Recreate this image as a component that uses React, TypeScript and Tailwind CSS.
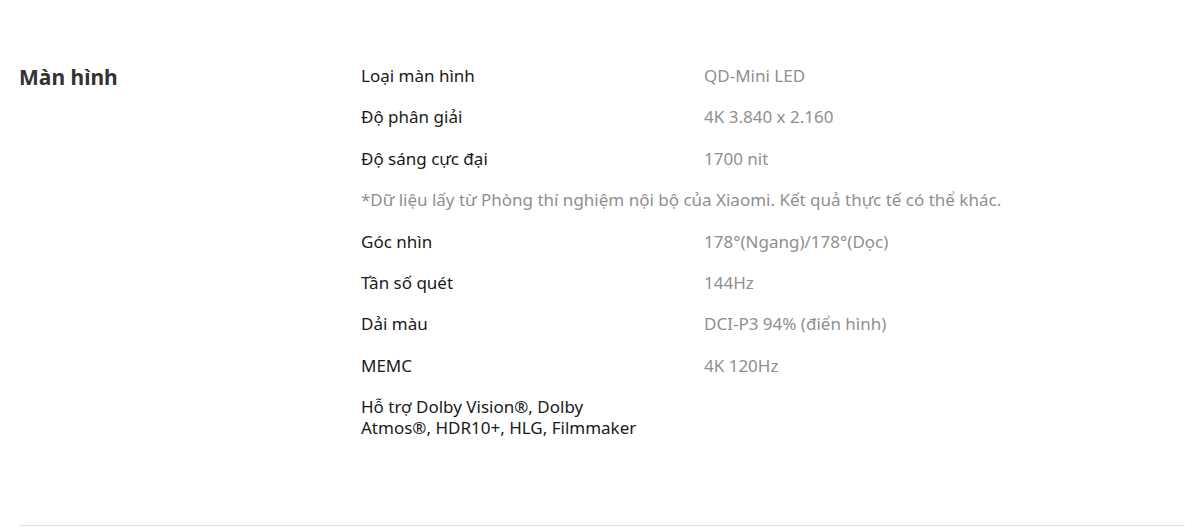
const specs: { label: string; value?: string; note?: boolean }[] = [
  { label: "Loại màn hình", value: "QD-Mini LED" },
  { label: "Độ phân giải", value: "4K 3.840 x 2.160" },
  { label: "Độ sáng cực đại", value: "1700 nit" },
  { label: "*Dữ liệu lấy từ Phòng thí nghiệm nội bộ của Xiaomi. Kết quả thực tế có thể khác.", note: true },
  { label: "Góc nhìn", value: "178°(Ngang)/178°(Dọc)" },
  { label: "Tần số quét", value: "144Hz" },
  { label: "Dải màu", value: "DCI-P3 94% (điển hình)" },
  { label: "MEMC", value: "4K 120Hz" },
  { label: "Hỗ trợ Dolby Vision®, Dolby Atmos®, HDR10+, HLG, Filmmaker" },
];

export default function App() {
  return (
    <div className="w-[1200px] h-[532px] bg-white font-['Noto_Sans',sans-serif] overflow-hidden">
      <div className="ml-[19px] mr-[15px] pt-[65px] border-b border-[#e0e0e0] h-[526px]">
        <div className="flex">
          {/* Section title */}
          <h2 className="w-[342px] shrink-0 text-[21px] leading-[28px] font-bold text-[#333333] -mt-[2px]">
            Màn hình
          </h2>

          {/* Spec rows */}
          <div className="flex flex-col gap-[20.4px] text-[17px] leading-[21px]">
            {specs.map((s, i) =>
              s.note ? (
                <p key={i} className="text-[#8f8f8f]">
                  {s.label}
                </p>
              ) : (
                <div key={i} className="flex">
                  <span className="w-[343px] shrink-0 pr-[60px] text-[#1a1a1a]">{s.label}</span>
                  {s.value && <span className="text-[#8f8f8f]">{s.value}</span>}
                </div>
              )
            )}
          </div>
        </div>
      </div>
    </div>
  );
}
